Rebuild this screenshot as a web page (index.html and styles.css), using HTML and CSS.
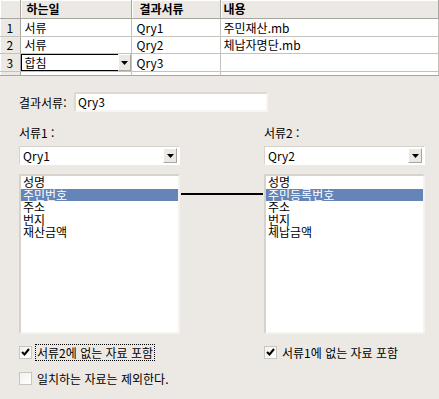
FILE: index.html
```html
<!DOCTYPE html>
<html lang="ko">
<head>
<meta charset="UTF-8">
<title>합침</title>
<link rel="stylesheet" href="styles.css">
</head>
<body>
    <div class="grid">
        <table class="sheet">
            <colgroup>
                <col class="c-num">
                <col class="c-job">
                <col class="c-doc">
                <col>
            </colgroup>
            <tr class="head">
                <th></th>
                <th>하는일</th>
                <th>결과서류</th>
                <th>내용</th>
            </tr>
            <tr class="r1">
                <td class="num">1</td>
                <td>서류</td>
                <td>Qry1</td>
                <td>주민재산.mb</td>
            </tr>
            <tr>
                <td class="num">2</td>
                <td>서류</td>
                <td>Qry2</td>
                <td>체납자명단.mb</td>
            </tr>
            <tr>
                <td class="num">3</td>
                <td class="editing">
                    <div class="cell-combo">
                        <span class="cell-text">합침</span>
                        <span class="drop small"><svg width="7" height="4" viewBox="0 0 7 4"><path d="M0 0h7L3.5 4z" fill="#000"/></svg></span>
                    </div>
                </td>
                <td>Qry3</td>
                <td></td>
            </tr>
            <tr class="rest">
                <td class="num"></td>
                <td></td>
                <td></td>
                <td></td>
            </tr>
        </table>
    </div>

    <div class="panel">
        <div class="result-row">
            <span class="result-label">결과서류:</span>
            <div class="textbox">Qry3</div>
        </div>

        <div class="lists">
            <div class="col">
                <div class="cap">서류1 :</div>
                <div class="combo">
                    <span class="combo-text">Qry1</span>
                    <span class="drop"><svg width="7" height="4" viewBox="0 0 7 4"><path d="M0 0h7L3.5 4z" fill="#000"/></svg></span>
                </div>
                <ul class="listbox">
                    <li>성명</li>
                    <li class="sel">주민번호</li>
                    <li>주소</li>
                    <li>번지</li>
                    <li>재산금액</li>
                </ul>
                <div class="check">
                    <span class="box"><svg width="9" height="9" viewBox="0 0 9 9"><path d="M1 4l2.5 2.5L8 1" stroke="#000" stroke-width="2" fill="none"/></svg></span>
                    <span class="check-text focus">서류2에 없는 자료 포함</span>
                </div>
                <div class="check">
                    <span class="box"></span>
                    <span class="check-text">일치하는 자료는 제외한다.</span>
                </div>
            </div>

            <div class="link"><div class="link-line"></div></div>

            <div class="col">
                <div class="cap">서류2 :</div>
                <div class="combo">
                    <span class="combo-text">Qry2</span>
                    <span class="drop"><svg width="7" height="4" viewBox="0 0 7 4"><path d="M0 0h7L3.5 4z" fill="#000"/></svg></span>
                </div>
                <ul class="listbox">
                    <li>성명</li>
                    <li class="sel">주민등록번호</li>
                    <li>주소</li>
                    <li>번지</li>
                    <li>체납금액</li>
                </ul>
                <div class="check">
                    <span class="box"><svg width="9" height="9" viewBox="0 0 9 9"><path d="M1 4l2.5 2.5L8 1" stroke="#000" stroke-width="2" fill="none"/></svg></span>
                    <span class="check-text">서류1에 없는 자료 포함</span>
                </div>
            </div>
        </div>
    </div>
</body>
</html>
```

FILE: styles.css
```css
body {
    margin: 0;
    background: #ece9e4;
    font-family: "Noto Sans CJK KR", "DejaVu Sans", sans-serif;
    font-size: 12px;
    color: #000;
    width: 439px;
    height: 399px;
    overflow: hidden;
}

/* ---- top grid ---- */
.grid {
    height: 75px;
    overflow: hidden;
    background: #fff;
    border-bottom: 1px solid #a8a6a0;
}
.sheet {
    border-collapse: collapse;
    table-layout: fixed;
    width: 439px;
}
.c-num { width: 20px; }
.c-job { width: 111px; }
.c-doc { width: 89px; }
.sheet th, .sheet td {
    padding: 0 0 0 4px;
    height: 16px;
    line-height: 16px;
    text-align: left;
    white-space: nowrap;
    border-right: 1px solid #c4c2bc;
    border-bottom: 1px solid #c4c2bc;
}
.sheet .head th {
    height: 18px;
    line-height: 18px;
    background: #ece9e4;
    font-weight: bold;
    padding-left: 6px;
    border-right: 1px solid #a8a6a0;
    border-bottom: 1px solid #a8a6a0;
    box-shadow: inset 1px 1px 0 #fff;
}
.sheet .head th:nth-child(3) { padding-left: 8px; }
.sheet .head th:nth-child(4) { padding-left: 3px; }
.sheet td.num {
    background: #ece9e4;
    text-align: center;
    padding: 0;
    border-right: 1px solid #a8a6a0;
    border-bottom: 1px solid #c4c2bc;
    box-shadow: inset 1px 0 0 #fff;
}
.sheet .r1 td { height: 17px; }
.sheet td:nth-child(3) { padding-left: 5px; }
.sheet td:nth-child(4) { padding-left: 3px; }
.sheet .rest td { height: 4px; border-bottom: none; }

.sheet td.editing { padding: 0; }
.cell-combo {
    display: flex;
    height: 17px;
}
.cell-text {
    flex: 1;
    border: 1px solid #000;
    border-right: none;
    line-height: 15px;
    padding-left: 3px;
}

/* ---- lower panel ---- */
.panel {
    padding: 16px 0 0 19px;
}
.result-row {
    display: flex;
    align-items: center;
    height: 20px;
}
.result-label {
    width: 55px;
}
.textbox {
    width: 188px;
    height: 16px;
    line-height: 16px;
    padding-left: 2px;
    background: #fff;
    border: 2px solid;
    border-color: #dcd9d2 #f6f5f2 #f6f5f2 #dcd9d2;
}

.lists {
    display: flex;
    margin-top: 14px;
}
.col {
    width: 161px;
}
.cap {
    height: 14px;
    line-height: 14px;
}
.combo {
    display: flex;
    align-items: center;
    margin-top: 6px;
    height: 15px;
    padding: 1px 2px 1px 0;
    background: #fff;
    border: 1px solid;
    border-color: #d6d3cc #fff #fff #d6d3cc;
    box-shadow: 0 0 0 1px #ece9e4;
}
.combo-text {
    flex: 1;
    padding-left: 3px;
}
.drop {
    display: flex;
    align-items: center;
    justify-content: center;
    width: 14px;
    height: 15px;
    box-sizing: border-box;
    background: #ece9e4;
    border: 1px solid;
    border-color: #fff #a8a6a0 #a8a6a0 #fff;
}
.drop.small {
    width: 13px;
    height: 17px;
}

.listbox {
    list-style: none;
    margin: 9px 0 0;
    padding: 0;
    height: 156px;
    background: #fff;
    border: 2px solid;
    border-color: #d6d3cc #f4f3f0 #f4f3f0 #d6d3cc;
}
.listbox li {
    height: 12.5px;
    line-height: 12px;
    padding-left: 2px;
    white-space: nowrap;
}
.listbox li.sel {
    background: #6584b8;
    color: #fff;
}

.link {
    width: 84px;
}
.link-line {
    margin: 67px 1px 0 1px;
    height: 2px;
    background: #000;
}

.check {
    display: flex;
    align-items: center;
    height: 17px;
    margin-top: 10px;
}
.check + .check {
    margin-top: 9px;
}
.box {
    display: flex;
    align-items: center;
    justify-content: center;
    width: 11px;
    height: 11px;
    border: 1px solid #c8c6c0;
    background: linear-gradient(135deg, #f2f1ec, #fff);
    margin-right: 4px;
}
.check-text {
    padding: 0 1px;
    line-height: 15px;
}
.check-text.focus {
    outline: 1px dotted #000;
}
```
